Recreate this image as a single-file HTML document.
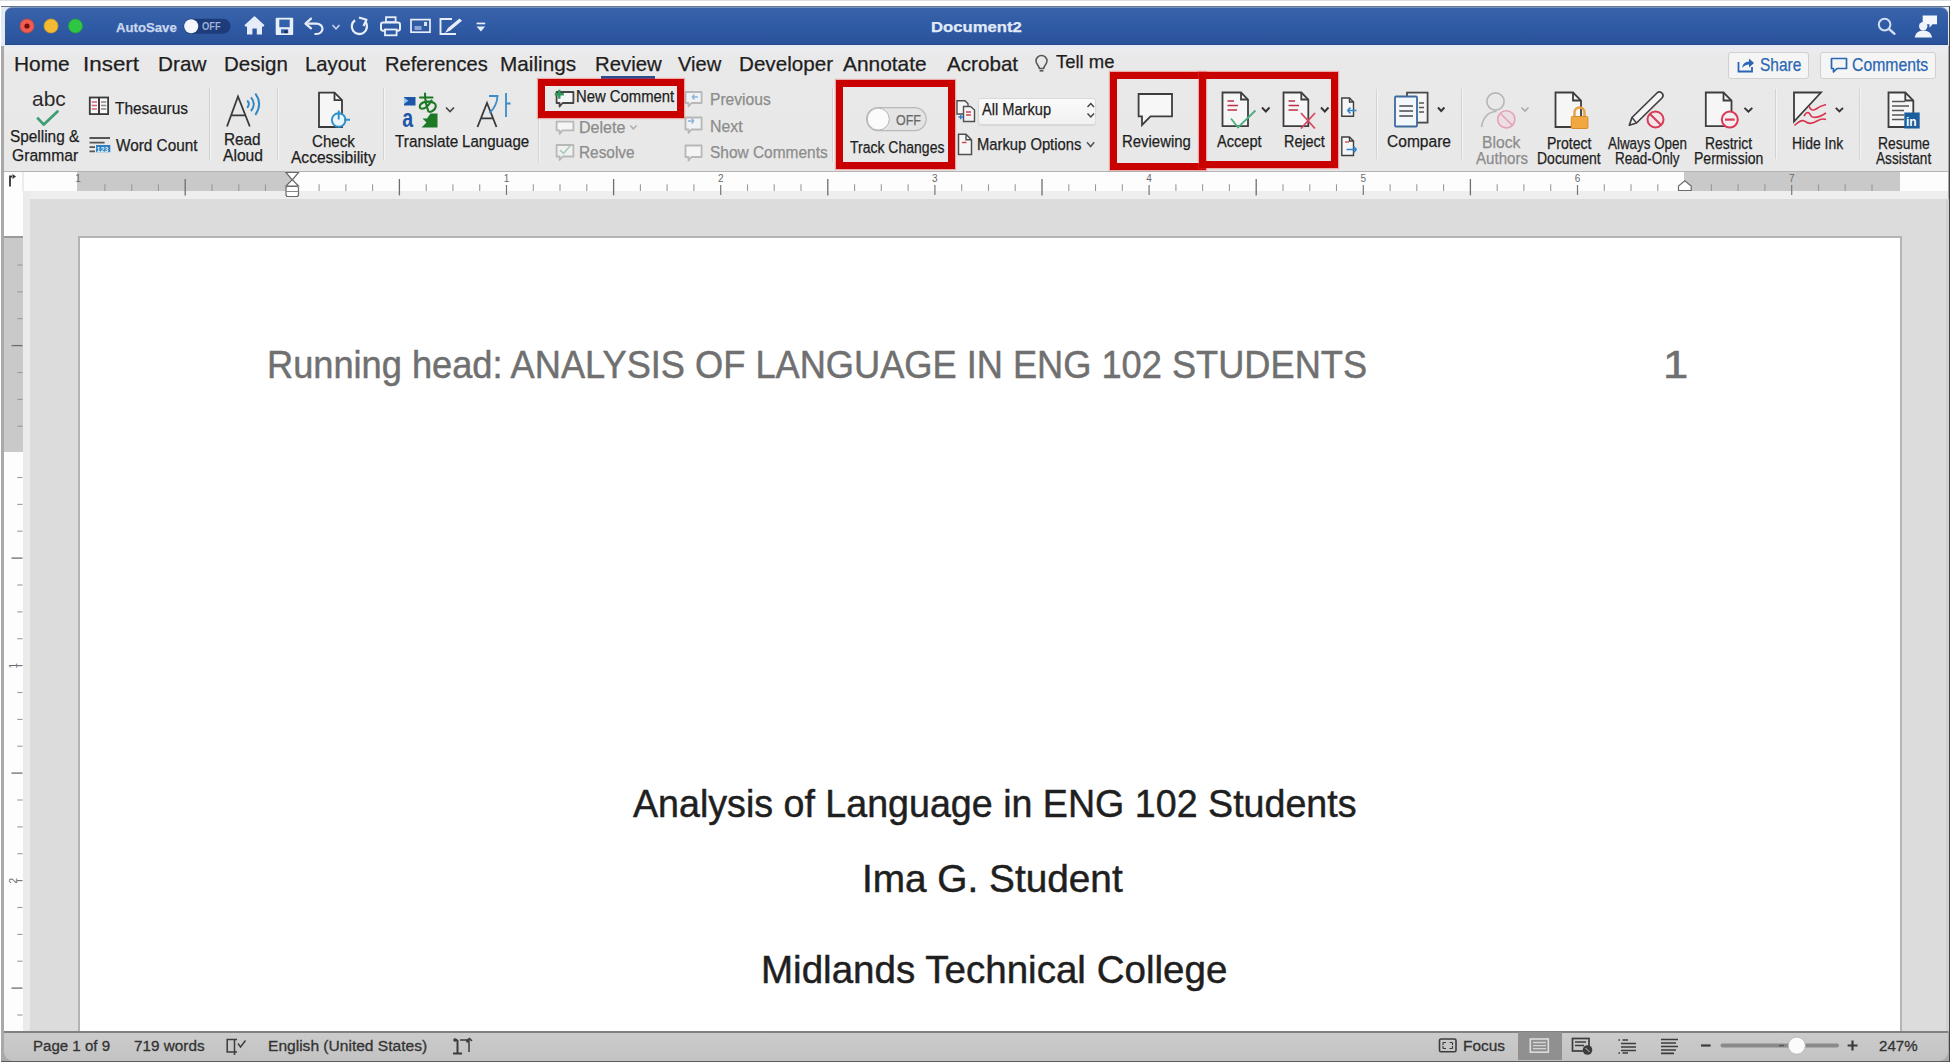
<!DOCTYPE html>
<html><head><meta charset="utf-8"><title>Document2</title>
<style>
*{margin:0;padding:0;box-sizing:border-box}
html,body{width:1951px;height:1064px;overflow:hidden;background:#fff;position:relative;font-family:"Liberation Sans",sans-serif}
.t{position:absolute;white-space:nowrap;line-height:1;transform-origin:0 0;font-family:"Liberation Sans",sans-serif;-webkit-text-stroke:.25px currentColor}
.bl{display:inline-block;width:0;height:0}
.a{position:absolute}
.sep{position:absolute;width:2px;background:#d3d3d3;border-right:1px solid #f4f4f4}
.rbox{position:absolute;border:7px solid #c80000;box-shadow:0 0 1px 1px rgba(240,60,60,.35)}
svg{position:absolute;overflow:visible}
</style></head><body>
<div class="a" style="left:0;top:0;width:1951px;height:1px;background:#dadde1"></div>
<div class="a" style="left:1px;top:6px;width:1949px;height:1056px;background:#a9a9a9"></div>
<div class="a" style="left:1px;top:6px;width:1949px;height:40px;background:#e4e9f1"></div>
<div class="a" style="left:1px;top:6px;width:1949px;height:1px;background:#66768c"></div>
<div class="a" style="left:5px;top:7px;width:1943px;height:38px;border-radius:7px 7px 0 0;background:linear-gradient(#3a63a8,#305ca6 45%,#2a5299);border-top:1px solid #7592c2;border-bottom:1px solid #27498a"></div>
<div class="a" style="left:4px;top:45px;width:1944px;height:126px;background:linear-gradient(#e4eaf4,#ececef 4px,#e9e9e9 12px,#e8e8e8)"></div>
<div class="a" style="left:4px;top:171px;width:1944px;height:1px;background:#b4b4b4"></div>
<div class="a" style="left:4px;top:172px;width:1944px;height:19px;background:#fdfdfd"></div>
<div class="a" style="left:77px;top:172px;width:215px;height:19px;background:#c9c9c9"></div>
<div class="a" style="left:1684px;top:172px;width:216px;height:19px;background:#c9c9c9"></div>
<div class="a" style="left:22px;top:172px;width:2px;height:19px;background:#ececec"></div>
<div class="a" style="left:22px;top:190.5px;width:1926px;height:8.5px;background:#eeeeee"></div>
<div class="a" style="left:22px;top:191px;width:8px;height:840px;background:#ebebeb"></div>
<div class="a" style="left:30px;top:199px;width:1918px;height:832px;background:#dcdcdc"></div>
<div class="a" style="left:78px;top:236px;width:1824px;height:800px;background:#fff;border-left:2px solid #b4b4b4;border-top:2px solid #b4b4b4;border-right:2px solid #b4b4b4"></div>
<div class="a" style="left:4px;top:191px;width:19px;height:840px;background:#fdfdfd"></div>
<div class="a" style="left:4px;top:237px;width:19px;height:215px;background:#c9c9c9"></div>
<div class="a" style="left:4px;top:1031px;width:1944px;height:2px;background:#808080"></div>
<div class="a" style="left:4px;top:1033px;width:1944px;height:28px;background:linear-gradient(#cbcbcb,#c3c3c3);border-radius:0 0 9px 9px"></div>
<div class="a" style="left:1517.5px;top:1032px;width:44px;height:28px;background:#909090"></div>
<div class="a" style="left:1px;top:1061px;width:1949px;height:1px;background:#5a5a5a"></div>
<div class="a" style="left:1949px;top:6px;width:1px;height:1056px;background:#454545"></div>
<div class="a" style="left:1946px;top:199px;width:3px;height:832px;background:#d2d2d2"></div>
<svg style="left:0;top:165px" width="1951" height="40" viewBox="0 165 1951 40"><text x="78.1" y="181.5" font-size="10" font-family="Liberation Sans" text-anchor="middle" fill="#6a6a6a">1</text><path d="M104.9 184.3 V191" stroke="#9a9a9a" stroke-width="1.1"/><path d="M131.7 184.3 V191" stroke="#9a9a9a" stroke-width="1.1"/><path d="M158.4 184.3 V191" stroke="#9a9a9a" stroke-width="1.1"/><path d="M185.2 179 V195.4" stroke="#6e6e6e" stroke-width="1.3"/><path d="M212.0 184.3 V191" stroke="#9a9a9a" stroke-width="1.1"/><path d="M238.8 184.3 V191" stroke="#9a9a9a" stroke-width="1.1"/><path d="M265.5 184.3 V191" stroke="#9a9a9a" stroke-width="1.1"/><path d="M319.1 184.3 V191" stroke="#9a9a9a" stroke-width="1.1"/><path d="M345.9 184.3 V191" stroke="#9a9a9a" stroke-width="1.1"/><path d="M372.6 184.3 V191" stroke="#9a9a9a" stroke-width="1.1"/><path d="M399.4 179 V195.4" stroke="#6e6e6e" stroke-width="1.3"/><path d="M426.2 184.3 V191" stroke="#9a9a9a" stroke-width="1.1"/><path d="M452.9 184.3 V191" stroke="#9a9a9a" stroke-width="1.1"/><path d="M479.7 184.3 V191" stroke="#9a9a9a" stroke-width="1.1"/><text x="506.5" y="181.5" font-size="10" font-family="Liberation Sans" text-anchor="middle" fill="#6a6a6a">1</text><path d="M506.5 185 V195" stroke="#777" stroke-width="1.2"/><path d="M533.3 184.3 V191" stroke="#9a9a9a" stroke-width="1.1"/><path d="M560.0 184.3 V191" stroke="#9a9a9a" stroke-width="1.1"/><path d="M586.8 184.3 V191" stroke="#9a9a9a" stroke-width="1.1"/><path d="M613.6 179 V195.4" stroke="#6e6e6e" stroke-width="1.3"/><path d="M640.4 184.3 V191" stroke="#9a9a9a" stroke-width="1.1"/><path d="M667.1 184.3 V191" stroke="#9a9a9a" stroke-width="1.1"/><path d="M693.9 184.3 V191" stroke="#9a9a9a" stroke-width="1.1"/><text x="720.7" y="181.5" font-size="10" font-family="Liberation Sans" text-anchor="middle" fill="#6a6a6a">2</text><path d="M720.7 185 V195" stroke="#777" stroke-width="1.2"/><path d="M747.5 184.3 V191" stroke="#9a9a9a" stroke-width="1.1"/><path d="M774.2 184.3 V191" stroke="#9a9a9a" stroke-width="1.1"/><path d="M801.0 184.3 V191" stroke="#9a9a9a" stroke-width="1.1"/><path d="M827.8 179 V195.4" stroke="#6e6e6e" stroke-width="1.3"/><path d="M854.6 184.3 V191" stroke="#9a9a9a" stroke-width="1.1"/><path d="M881.3 184.3 V191" stroke="#9a9a9a" stroke-width="1.1"/><path d="M908.1 184.3 V191" stroke="#9a9a9a" stroke-width="1.1"/><text x="934.9" y="181.5" font-size="10" font-family="Liberation Sans" text-anchor="middle" fill="#6a6a6a">3</text><path d="M934.9 185 V195" stroke="#777" stroke-width="1.2"/><path d="M961.7 184.3 V191" stroke="#9a9a9a" stroke-width="1.1"/><path d="M988.5 184.3 V191" stroke="#9a9a9a" stroke-width="1.1"/><path d="M1015.2 184.3 V191" stroke="#9a9a9a" stroke-width="1.1"/><path d="M1042.0 179 V195.4" stroke="#6e6e6e" stroke-width="1.3"/><path d="M1068.8 184.3 V191" stroke="#9a9a9a" stroke-width="1.1"/><path d="M1095.5 184.3 V191" stroke="#9a9a9a" stroke-width="1.1"/><path d="M1122.3 184.3 V191" stroke="#9a9a9a" stroke-width="1.1"/><text x="1149.1" y="181.5" font-size="10" font-family="Liberation Sans" text-anchor="middle" fill="#6a6a6a">4</text><path d="M1149.1 185 V195" stroke="#777" stroke-width="1.2"/><path d="M1175.9 184.3 V191" stroke="#9a9a9a" stroke-width="1.1"/><path d="M1202.6 184.3 V191" stroke="#9a9a9a" stroke-width="1.1"/><path d="M1229.4 184.3 V191" stroke="#9a9a9a" stroke-width="1.1"/><path d="M1256.2 179 V195.4" stroke="#6e6e6e" stroke-width="1.3"/><path d="M1283.0 184.3 V191" stroke="#9a9a9a" stroke-width="1.1"/><path d="M1309.8 184.3 V191" stroke="#9a9a9a" stroke-width="1.1"/><path d="M1336.5 184.3 V191" stroke="#9a9a9a" stroke-width="1.1"/><text x="1363.3" y="181.5" font-size="10" font-family="Liberation Sans" text-anchor="middle" fill="#6a6a6a">5</text><path d="M1363.3 185 V195" stroke="#777" stroke-width="1.2"/><path d="M1390.1 184.3 V191" stroke="#9a9a9a" stroke-width="1.1"/><path d="M1416.8 184.3 V191" stroke="#9a9a9a" stroke-width="1.1"/><path d="M1443.6 184.3 V191" stroke="#9a9a9a" stroke-width="1.1"/><path d="M1470.4 179 V195.4" stroke="#6e6e6e" stroke-width="1.3"/><path d="M1497.2 184.3 V191" stroke="#9a9a9a" stroke-width="1.1"/><path d="M1523.9 184.3 V191" stroke="#9a9a9a" stroke-width="1.1"/><path d="M1550.7 184.3 V191" stroke="#9a9a9a" stroke-width="1.1"/><text x="1577.5" y="181.5" font-size="10" font-family="Liberation Sans" text-anchor="middle" fill="#6a6a6a">6</text><path d="M1577.5 185 V195" stroke="#777" stroke-width="1.2"/><path d="M1604.3 184.3 V191" stroke="#9a9a9a" stroke-width="1.1"/><path d="M1631.0 184.3 V191" stroke="#9a9a9a" stroke-width="1.1"/><path d="M1657.8 184.3 V191" stroke="#9a9a9a" stroke-width="1.1"/><path d="M1711.4 184.3 V191" stroke="#9a9a9a" stroke-width="1.1"/><path d="M1738.1 184.3 V191" stroke="#9a9a9a" stroke-width="1.1"/><path d="M1764.9 184.3 V191" stroke="#9a9a9a" stroke-width="1.1"/><text x="1791.7" y="181.5" font-size="10" font-family="Liberation Sans" text-anchor="middle" fill="#6a6a6a">7</text><path d="M1791.7 185 V195" stroke="#777" stroke-width="1.2"/><path d="M1818.5 184.3 V191" stroke="#9a9a9a" stroke-width="1.1"/><path d="M1845.2 184.3 V191" stroke="#9a9a9a" stroke-width="1.1"/><path d="M1872.0 184.3 V191" stroke="#9a9a9a" stroke-width="1.1"/></svg>
<svg style="left:280px;top:170px" width="25" height="30" viewBox="280 170 25 30"><path d="M286 172.5 H298.5 L292.3 180 Z M286 186 L292.3 179.5 L298.5 186 Z" fill="#fff" stroke="#6a6a6a" stroke-width="1.2"/><rect x="286" y="186.5" width="12.5" height="10" rx="2" fill="#fff" stroke="#6a6a6a" stroke-width="1.2"/><path d="M286 191.5 H298.5" stroke="#888" stroke-width="1"/></svg>
<svg style="left:1675px;top:178px" width="20" height="16" viewBox="1675 178 20 16"><path d="M1678.5 190.5 V186 L1684.8 180.8 L1691.2 186 V190.5 Z" fill="#fff" stroke="#6a6a6a" stroke-width="1.2"/></svg>
<svg style="left:6px;top:172px" width="16" height="18" viewBox="6 172 16 18"><path d="M10 186.5 V176.5 H12" fill="none" stroke="#333" stroke-width="1.8"/><path d="M12.5 174 L16 176.5 L12.5 179 Z" fill="#333"/></svg>
<svg style="left:0;top:230px" width="30" height="805" viewBox="0 230 30 805"><path d="M17.3 265.0 H22.5" stroke="#9a9a9a" stroke-width="1.1"/><path d="M17.3 291.9 H22.5" stroke="#9a9a9a" stroke-width="1.1"/><path d="M17.3 318.7 H22.5" stroke="#9a9a9a" stroke-width="1.1"/><path d="M11.5 345.6 H22.5" stroke="#6e6e6e" stroke-width="1.3"/><path d="M17.3 372.5 H22.5" stroke="#9a9a9a" stroke-width="1.1"/><path d="M17.3 399.4 H22.5" stroke="#9a9a9a" stroke-width="1.1"/><path d="M17.3 426.2 H22.5" stroke="#9a9a9a" stroke-width="1.1"/><path d="M17.3 477.5 H22.5" stroke="#9a9a9a" stroke-width="1.1"/><path d="M17.3 504.4 H22.5" stroke="#9a9a9a" stroke-width="1.1"/><path d="M17.3 531.2 H22.5" stroke="#9a9a9a" stroke-width="1.1"/><path d="M11.5 558.1 H22.5" stroke="#6e6e6e" stroke-width="1.3"/><path d="M17.3 585.0 H22.5" stroke="#9a9a9a" stroke-width="1.1"/><path d="M17.3 611.9 H22.5" stroke="#9a9a9a" stroke-width="1.1"/><path d="M17.3 638.7 H22.5" stroke="#9a9a9a" stroke-width="1.1"/><text x="0" y="0" font-size="10" font-family="Liberation Sans" text-anchor="middle" fill="#6a6a6a" transform="translate(13.5 665.6) rotate(-90)" dy="3.5">1</text><path d="M17 665.6 H22.5" stroke="#777" stroke-width="1.2"/><path d="M17.3 692.5 H22.5" stroke="#9a9a9a" stroke-width="1.1"/><path d="M17.3 719.4 H22.5" stroke="#9a9a9a" stroke-width="1.1"/><path d="M17.3 746.2 H22.5" stroke="#9a9a9a" stroke-width="1.1"/><path d="M11.5 773.1 H22.5" stroke="#6e6e6e" stroke-width="1.3"/><path d="M17.3 800.0 H22.5" stroke="#9a9a9a" stroke-width="1.1"/><path d="M17.3 826.9 H22.5" stroke="#9a9a9a" stroke-width="1.1"/><path d="M17.3 853.7 H22.5" stroke="#9a9a9a" stroke-width="1.1"/><text x="0" y="0" font-size="10" font-family="Liberation Sans" text-anchor="middle" fill="#6a6a6a" transform="translate(13.5 880.6) rotate(-90)" dy="3.5">2</text><path d="M17 880.6 H22.5" stroke="#777" stroke-width="1.2"/><path d="M17.3 907.5 H22.5" stroke="#9a9a9a" stroke-width="1.1"/><path d="M17.3 934.4 H22.5" stroke="#9a9a9a" stroke-width="1.1"/><path d="M17.3 961.2 H22.5" stroke="#9a9a9a" stroke-width="1.1"/><path d="M11.5 988.1 H22.5" stroke="#6e6e6e" stroke-width="1.3"/><path d="M17.3 1015.0 H22.5" stroke="#9a9a9a" stroke-width="1.1"/></svg>
<div class="a" style="left:4px;top:236px;width:19px;height:2px;background:#9a9a9a"></div>
<svg style="left:224px;top:1036px" width="26" height="22" viewBox="224 1036 26 22"><path d="M237 1039.5 H227.2 V1052 H237 M234.5 1039.5 V1055" fill="none" stroke="#3c3c3c" stroke-width="1.5"/><path d="M238 1043.5 L240.5 1047 L245.5 1040.5" fill="none" stroke="#3c3c3c" stroke-width="1.4"/></svg>
<svg style="left:450px;top:1036px" width="24" height="22" viewBox="450 1036 24 22"><path d="M453 1053.5 H462 M457.5 1040 V1053.5 M454 1040 H457.5" fill="none" stroke="#3c3c3c" stroke-width="2"/><circle cx="455" cy="1040" r="1.8" fill="#3c3c3c"/><path d="M460 1040 H469 V1052 M469 1040 L466.5 1042.5" fill="none" stroke="#3c3c3c" stroke-width="1.5"/><path d="M466 1041 L469.5 1038.5 L472 1041" fill="none" stroke="#3c3c3c" stroke-width="1.5"/></svg>
<svg style="left:1436px;top:1036px" width="24" height="20" viewBox="1436 1036 24 20"><rect x="1439.5" y="1039" width="16.5" height="12.8" rx="1.5" fill="none" stroke="#3c3c3c" stroke-width="1.6"/><path d="M1443 1042.5 H1446 M1443 1042.5 V1045 M1452.5 1042.5 H1449.5 M1452.5 1042.5 V1045 M1443 1048.5 H1446 M1443 1048.5 V1046 M1452.5 1048.5 H1449.5 M1452.5 1048.5 V1046" stroke="#3c3c3c" stroke-width="1.2" fill="none"/></svg>
<svg style="left:1526px;top:1036px" width="26" height="20" viewBox="1526 1036 26 20"><rect x="1530.3" y="1039" width="18" height="13.2" fill="none" stroke="#dcdcdc" stroke-width="1.6"/><path d="M1533 1042.5 H1546 M1533 1045.6 H1546 M1533 1048.7 H1546" stroke="#d4d4d4" stroke-width="1.3"/></svg>
<svg style="left:1569px;top:1036px" width="28" height="22" viewBox="1569 1036 28 22"><rect x="1572.5" y="1038.5" width="16.5" height="12.5" fill="none" stroke="#3c3c3c" stroke-width="1.7"/><path d="M1575 1042 H1586 M1575 1045.5 H1584" stroke="#3c3c3c" stroke-width="1.4"/><circle cx="1587.5" cy="1050" r="4.8" fill="#3c3c3c"/><path d="M1585.5 1048 L1589.5 1052" stroke="#c4c4c4" stroke-width="1"/></svg>
<svg style="left:1616px;top:1036px" width="24" height="20" viewBox="1616 1036 24 20"><path d="M1618.5 1040 H1620 M1622.5 1040 H1628 M1621 1043.5 H1636 M1621 1047 H1636 M1621 1050.5 H1636 M1618.5 1053 H1620 M1622.5 1053 H1628" stroke="#3c3c3c" stroke-width="1.6"/></svg>
<svg style="left:1658px;top:1036px" width="24" height="20" viewBox="1658 1036 24 20"><path d="M1661 1039.5 H1678 M1661 1043 H1676 M1661 1046.5 H1678 M1661 1050 H1676 M1661 1053.3 H1674" stroke="#3c3c3c" stroke-width="1.7"/></svg>
<svg style="left:1695px;top:1034px" width="170" height="24" viewBox="1695 1034 170 24"><path d="M1701 1045.5 H1710.6" stroke="#3c3c3c" stroke-width="2.2"/><rect x="1720.5" y="1043.6" width="118.5" height="4" rx="2" fill="#8a8a8a"/><path d="M1779 1045.6 H1784" stroke="#555" stroke-width="1.4"/><circle cx="1796.8" cy="1045.6" r="8.6" fill="#fbfbfb" stroke="#b0b0b0" stroke-width=".8"/><path d="M1847.6 1045.5 H1857.5 M1852.5 1040.5 V1050.5" stroke="#3c3c3c" stroke-width="2.2"/></svg>
<svg style="left:15px;top:14px" width="72" height="26" viewBox="15 14 72 26"><circle cx="27" cy="26" r="7" fill="#ef5d52" stroke="#c9453c" stroke-width=".8"/><circle cx="27" cy="26" r="2.6" fill="#7a0a08"/><circle cx="51" cy="26" r="7" fill="#f3bb34" stroke="#cf9a22" stroke-width=".8"/><circle cx="75.5" cy="26" r="7" fill="#30c645" stroke="#21a233" stroke-width=".8"/></svg>
<svg style="left:180px;top:16px" width="55" height="22" viewBox="180 16 55 22"><rect x="183.5" y="18.7" width="47" height="15" rx="7.5" fill="#1e3c79"/><circle cx="191.2" cy="26.2" r="7" fill="#f4f6fb"/></svg>
<svg style="left:243px;top:15px" width="23" height="22" viewBox="243 15 23 22"><path d="M245.2 26.2 L254.5 17.6 L263.7 26.2" fill="none" stroke="#e8eef9" stroke-width="2.4" stroke-linejoin="round"/><path d="M247 25.2 L254.5 18.8 L262 25.2 V34.6 H256.8 V28.4 H252.4 V34.6 H247 Z" fill="#e8eef9"/></svg>
<svg style="left:274px;top:16px" width="21" height="21" viewBox="274 16 21 21"><rect x="275.7" y="17.7" width="17.5" height="17.3" rx="1" fill="#e8eef9"/><rect x="279.3" y="19.6" width="10.4" height="7.6" fill="#3361ab"/><rect x="281" y="29.3" width="7.2" height="4" fill="#3361ab"/><rect x="284.5" y="30.5" width="3" height="2.6" fill="#1a2a4a"/></svg>
<svg style="left:303px;top:15px" width="40" height="22" viewBox="303 15 40 22"><path d="M307.5 23.6 H316.5 A6 5.2 0 0 1 316.5 34 H314.5" fill="none" stroke="#e8eef9" stroke-width="2.2"/><path d="M305.5 23.6 L311 18.6 M305.5 23.6 L311 28.4" stroke="#e8eef9" stroke-width="2.2" fill="none" stroke-linecap="round"/><path d="M332.5 25 L336 28.8 L339.5 25" fill="none" stroke="#c5d2ec" stroke-width="1.6"/></svg>
<svg style="left:348px;top:15px" width="23" height="23" viewBox="348 15 23 23"><path d="M355 20.2 A7.6 7.6 0 1 0 365.6 22" fill="none" stroke="#e8eef9" stroke-width="2.3"/><path d="M359 17.5 L366.5 19.8 L363.5 26" fill="none" stroke="#e8eef9" stroke-width="2.2" stroke-linejoin="round"/></svg>
<svg style="left:378px;top:15px" width="25" height="23" viewBox="378 15 25 23"><rect x="386" y="17.2" width="9.6" height="5" fill="none" stroke="#e8eef9" stroke-width="1.8"/><rect x="381" y="22.4" width="19" height="8.4" rx="2.2" fill="none" stroke="#e8eef9" stroke-width="2"/><rect x="385" y="29.5" width="11.6" height="5.8" fill="#2f5ca7" stroke="#e8eef9" stroke-width="1.8"/></svg>
<svg style="left:408px;top:17px" width="25" height="18" viewBox="408 17 25 18"><rect x="411" y="19.6" width="19" height="12.6" fill="none" stroke="#e8eef9" stroke-width="1.7"/><rect x="414.5" y="26" width="7" height="4" fill="#8ea6d4"/><rect x="424" y="22" width="3" height="4" fill="#dbe4f5"/></svg>
<svg style="left:437px;top:16px" width="28" height="21" viewBox="437 16 28 21"><path d="M452 19 H440.5 V34 H456" fill="none" stroke="#e8eef9" stroke-width="1.9"/><path d="M445 33 L448 28 L459.5 18.6 L462 20.8 L450.5 30.2 Z" fill="#e8eef9"/></svg>
<svg style="left:474px;top:20px" width="14" height="14" viewBox="474 20 14 14"><rect x="476.6" y="22.6" width="8.6" height="1.7" fill="#e8eef9"/><path d="M476.6 26.4 H485.2 L480.9 31.6 Z" fill="#e8eef9"/></svg>
<svg style="left:1876px;top:16px" width="22" height="22" viewBox="1876 16 22 22"><circle cx="1884.6" cy="24.6" r="5.8" fill="none" stroke="#d2def3" stroke-width="2"/><path d="M1889 29 L1894.5 33.8" stroke="#d2def3" stroke-width="2.4" stroke-linecap="round"/></svg>
<svg style="left:1912px;top:13px" width="28" height="27" viewBox="1912 13 28 27"><path d="M1922.7 15.4 H1937 V24.3 H1932.5 L1929.5 27.8 V24.3 H1922.7 Z" fill="#f4f7fc"/><circle cx="1923.2" cy="26.3" r="4.2" fill="#eef3fb"/><path d="M1914.6 37.4 Q1916 30.6 1923.3 30.6 Q1930.6 30.6 1932.3 37.4 Z" fill="#eef3fb"/></svg>
<div class="a" style="left:1727.5px;top:51.5px;width:81px;height:27px;border:1px solid #d0d0d0;border-radius:3px;background:#f5f5f5"></div>
<div class="a" style="left:1820px;top:51.5px;width:116px;height:27px;border:1px solid #d0d0d0;border-radius:3px;background:#f5f5f5"></div>
<svg style="left:1736px;top:56px" width="19" height="18" viewBox="1736 56 19 18"><path d="M1738.5 62 V71.5 H1752 V67" fill="none" stroke="#2a66b3" stroke-width="1.8"/><path d="M1742 68 Q1743 61.5 1749 61.5 V58.5 L1754 63 L1749 67.5 V64.5 Q1745 64.5 1742 68Z" fill="#2a66b3"/></svg>
<svg style="left:1829px;top:56px" width="20" height="18" viewBox="1829 56 20 18"><path d="M1831.5 58.5 H1846.5 V68.5 H1837 L1833.5 72 V68.5 H1831.5 Z" fill="none" stroke="#2a66b3" stroke-width="1.7" stroke-linejoin="round"/></svg>
<svg style="left:1033px;top:53px" width="17" height="21" viewBox="1033 53 17 21"><path d="M1041.5 55.5 A5.5 5.5 0 0 0 1036 61 C1036 64 1038.8 65.5 1039.4 68.5 H1043.6 C1044.2 65.5 1047 64 1047 61 A5.5 5.5 0 0 0 1041.5 55.5 Z" fill="none" stroke="#555" stroke-width="1.5"/><path d="M1039.6 70.8 H1043.4" stroke="#555" stroke-width="1.6"/></svg>
<div class="a" style="left:601px;top:75.5px;width:53.5px;height:3px;background:#2b4c8c"></div>
<svg style="left:34px;top:108px" width="27" height="20" viewBox="34 108 27 20"><path d="M37.2 117.6 L43.8 124.6 L58.3 110.8" fill="none" stroke="#3f9d74" stroke-width="2.8" stroke-linejoin="round"/></svg>
<svg style="left:87px;top:95px" width="24" height="22" viewBox="87 95 24 22"><rect x="89.8" y="97.5" width="18.3" height="16.6" fill="#f8f8f8" stroke="#3a3a3a" stroke-width="1.8"/><path d="M99 97.5 V114.5" stroke="#3a3a3a" stroke-width="2"/><path d="M91.7 102 H97 M91.7 105.5 H97 M91.7 109 H97" stroke="#d0607a" stroke-width="1.3"/><path d="M101 102 H106.3 M101 105.5 H106.3 M101 109 H106.3" stroke="#888" stroke-width="1.3"/></svg>
<svg style="left:87px;top:135px" width="26" height="20" viewBox="87 135 26 20"><path d="M89.5 138 H110 M89.5 142.6 H104.6 M89.5 147.2 H95 M89.5 151.4 H95" stroke="#555" stroke-width="1.8"/><rect x="96" y="145" width="14.3" height="7.2" fill="#2f80c0"/><text x="96.6" y="151.5" font-size="7" font-family="Liberation Sans" font-weight="700" fill="#dff0ff">123</text></svg>
<div class="sep" style="left:208.5px;top:88px;height:72px"></div>
<div class="sep" style="left:277px;top:88px;height:72px"></div>
<div class="sep" style="left:383px;top:88px;height:72px"></div>
<div class="sep" style="left:538px;top:88px;height:74px"></div>
<div class="sep" style="left:831.5px;top:88px;height:74px"></div>
<div class="sep" style="left:1376px;top:89px;height:70px"></div>
<div class="sep" style="left:1460.5px;top:89px;height:70px"></div>
<div class="sep" style="left:1774.5px;top:89px;height:70px"></div>
<div class="sep" style="left:1858.5px;top:89px;height:70px"></div>
<svg style="left:222px;top:90px" width="44" height="40" viewBox="222 90 44 40"><path d="M227 126.5 L238 96.5 L249.8 126.5 M231.3 115.3 H245.5" fill="none" stroke="#3a3a3a" stroke-width="1.8"/><path d="M247.2 100.5 Q250.5 104 247.2 107.8 M251 97.3 Q256.6 104 251 111.2 M255.3 93.5 Q263 104 255.3 115" fill="none" stroke="#2f86c5" stroke-width="1.9"/></svg>
<svg style="left:315px;top:90px" width="40" height="42" viewBox="315 90 40 42"><path d="M319 92.7 H334.5 L342 100.2 V127 H319 Z" fill="#f6f6f6" stroke="#3a3a3a" stroke-width="1.8"/><path d="M334.5 92.7 V100.2 H342" fill="none" stroke="#3a3a3a" stroke-width="1.8"/><circle cx="338.7" cy="120" r="6.8" fill="#eaf4fb" stroke="#2f90c8" stroke-width="1.9"/><path d="M338.7 110.5 V119.5 M344 119.8 H350" stroke="#2f90c8" stroke-width="1.9"/></svg>
<svg style="left:400px;top:88px" width="42" height="42" viewBox="400 88 42 42"><path d="M404 97 H415.5 V105.5 H404 Z" fill="#1d56a8"/><path d="M404 97.5 L408.5 100.8 L404 104 Z" fill="#8fc3f0"/><text x="0" y="0" font-size="25" font-family="Liberation Sans" font-weight="700" fill="#1d56a8" transform="translate(402.3 127) scale(0.78 1)">a</text><path d="M420 97.5 H432.5 M425 93.5 Q425 103 428.5 111.5 M431.5 100.5 Q427 108.5 422 108.8 Q419 108.5 420 105.2 Q422 101.5 429 101.6 Q436.2 102 435.8 106.5 Q435 110.5 430 112" fill="none" stroke="#1c7a26" stroke-width="2.1" stroke-linecap="round"/><path d="M430.5 113.5 H437.5 V127.5 H421.5 L426.5 122.5 L422.5 118.5 L427 118.5 Z" fill="#1c7a26"/></svg>
<svg style="left:443px;top:104px" width="14" height="12" viewBox="443 104 14 12"><path d="M446 107.5 L450 111.6 L454 107.5" fill="none" stroke="#444" stroke-width="1.6"/></svg>
<svg style="left:474px;top:90px" width="40" height="40" viewBox="474 90 40 40"><path d="M477.5 127 L487 103 L496.5 127 M481 118.3 H493" fill="none" stroke="#3a3a3a" stroke-width="1.8"/><path d="M489 96 H497.5 Q497 106 489.5 113" fill="none" stroke="#3a8ccc" stroke-width="1.8"/><path d="M506 93 V117 M506 103.5 H510.5" stroke="#3a8ccc" stroke-width="1.8" fill="none"/></svg>
<svg style="left:550px;top:86px" width="30" height="24" viewBox="550 86 30 24"><path d="M556.6 92 H573.4 V103 H562.6 L559.6 106.5 V103 H556.6 Z" fill="#f6f6f6" stroke="#454545" stroke-width="1.8" stroke-linejoin="round"/><path d="M559.3 89.8 V98.8 M554.8 94.3 H563.8" stroke="#2c9a5a" stroke-width="2.4"/></svg>
<svg style="left:550px;top:116px" width="30" height="22" viewBox="550 116 30 22"><path d="M556.6 121.6 H573.4 V130.4 H562.6 L559.6 133.9 V130.4 H556.6 Z" fill="#f6f6f6" stroke="#b8b8b8" stroke-width="1.8" stroke-linejoin="round"/></svg>
<svg style="left:627px;top:122px" width="12" height="10" viewBox="627 122 12 10"><path d="M630.2 125.5 L633.4 128.8 L636.6 125.5" fill="none" stroke="#b0b0b0" stroke-width="1.6"/></svg>
<svg style="left:550px;top:141px" width="30" height="24" viewBox="550 141 30 24"><path d="M556.6 145 H573.4 V156.5 H562.6 L559.6 160 V156.5 H556.6 Z" fill="#f0f0f0" stroke="#b8b8b8" stroke-width="1.8" stroke-linejoin="round"/><path d="M560 150 L563.5 153.5 L570 146" fill="none" stroke="#a8c8b0" stroke-width="1.5"/></svg>
<svg style="left:682px;top:88px" width="24" height="22" viewBox="682 88 24 22"><path d="M685.5 92 H701.6 V103 H691.5 L688.5 106.5 V103 H685.5 Z" fill="#f0f2f5" stroke="#b8b8b8" stroke-width="1.8" stroke-linejoin="round"/><path d="M692 97 H698 M692 97 L694.5 94.5 M692 97 L694.5 99.5" stroke="#8ab4d4" stroke-width="1.3" fill="none"/></svg>
<svg style="left:682px;top:114px" width="24" height="22" viewBox="682 114 24 22"><path d="M685.5 117.5 H701.6 V129.5 H691.5 L688.5 133 V129.5 H685.5 Z" fill="#f0f2f5" stroke="#b8b8b8" stroke-width="1.8" stroke-linejoin="round"/><path d="M688 121 H694 M694 121 L691.5 118.5 M694 121 L691.5 123.5" stroke="#8ab4d4" stroke-width="1.3" fill="none"/></svg>
<svg style="left:682px;top:142px" width="24" height="22" viewBox="682 142 24 22"><path d="M685.5 145.5 H701.6 V157 H691.5 L688.5 160.5 V157 H685.5 Z" fill="#f4f4f4" stroke="#b8b8b8" stroke-width="1.8" stroke-linejoin="round"/></svg>
<svg style="left:862px;top:104px" width="68" height="30" viewBox="862 104 68 30"><rect x="866.6" y="107.6" width="59.6" height="23" rx="11.5" fill="#e4e4e4" stroke="#b9b9b9" stroke-width="1.2"/><circle cx="878.3" cy="119.1" r="11" fill="#fbfbfb" stroke="#b4b4b4" stroke-width="1"/></svg>
<svg style="left:953px;top:98px" width="24" height="26" viewBox="953 98 24 26"><path d="M957 100.8 H965 L968 103.8 V114 H957 Z" fill="#f4f4f4" stroke="#505050" stroke-width="1.4"/><path d="M963.5 106.5 H970.5 L974.5 110 V121.5 H963.5 Z" fill="#f4f4f4" stroke="#505050" stroke-width="1.4"/><path d="M966 112 H971 M966 115 H971" stroke="#d04050" stroke-width="1.4"/><path d="M958.5 117 H963 M960.7 114.8 V119.2" stroke="#2f7fd0" stroke-width="1.5"/></svg>
<div class="a" style="left:978px;top:97.5px;width:118px;height:27.5px;background:linear-gradient(#fbfbfb,#f1f1f1);border:1px solid #d9d9d9;border-radius:3px;box-shadow:0 1px 1px rgba(0,0,0,.08)"></div>
<svg style="left:1084px;top:100px" width="14" height="21" viewBox="1084 100 14 21"><path d="M1087.5 107 L1090.8 103.6 L1094 107 M1087.5 113.6 L1090.8 117 L1094 113.6" fill="none" stroke="#444" stroke-width="1.5"/></svg>
<svg style="left:955px;top:131px" width="20" height="26" viewBox="955 131 20 26"><path d="M958.5 134.3 H966 L971.5 139.8 V154.4 H958.5 Z" fill="#f6f6f6" stroke="#505050" stroke-width="1.5"/><path d="M966 134.3 V139.8 H971.5" fill="none" stroke="#505050" stroke-width="1.4"/><path d="M962 142.5 H966.5" stroke="#d04050" stroke-width="1.4"/></svg>
<svg style="left:1084px;top:139px" width="14" height="11" viewBox="1084 139 14 11"><path d="M1087 142.3 L1090.6 146.5 L1094.2 142.3" fill="none" stroke="#555" stroke-width="1.6"/></svg>
<svg style="left:1134px;top:90px" width="42" height="38" viewBox="1134 90 42 38"><path d="M1138.6 94 H1172 V116.3 H1150.5 L1142 125 V116.3 H1138.6 Z" fill="#f7f7f7" stroke="#3e3e3e" stroke-width="1.8" stroke-linejoin="miter"/></svg>
<svg style="left:1218px;top:89px" width="42" height="42" viewBox="1218 89 42 42"><path d="M1222.5 92.5 H1241 L1248 99.5 V126.2 H1222.5 Z" fill="#f6f6f6" stroke="#3e3e3e" stroke-width="1.8"/><path d="M1241 92.5 V99.5 H1248" fill="none" stroke="#3e3e3e" stroke-width="1.8"/><path d="M1227.5 101 H1234 M1227.5 105.5 H1238 M1227.5 110 H1237" stroke="#c0304a" stroke-width="1.6"/><path d="M1231 118.5 L1238 127.5 L1255.5 110.5" fill="none" stroke="#49b07a" stroke-width="1.8"/></svg>
<svg style="left:1259px;top:104px" width="14" height="11" viewBox="1259 104 14 11"><path d="M1262 107.5 L1265.8 111.5 L1269.5 107.5" fill="none" stroke="#333" stroke-width="1.9"/></svg>
<svg style="left:1280px;top:89px" width="40" height="42" viewBox="1280 89 40 42"><path d="M1283.5 92.5 H1301.3 L1308.3 99.5 V126.2 H1283.5 Z" fill="#f6f6f6" stroke="#3e3e3e" stroke-width="1.8"/><path d="M1301.3 92.5 V99.5 H1308.3" fill="none" stroke="#3e3e3e" stroke-width="1.8"/><path d="M1288.5 101 H1295 M1288.5 105.5 H1299 M1288.5 110 H1298" stroke="#c0304a" stroke-width="1.6"/><path d="M1301 113 L1315 128.5 M1315 113 L1301 128.5" stroke="#d84860" stroke-width="1.8"/></svg>
<svg style="left:1318px;top:104px" width="14" height="11" viewBox="1318 104 14 11"><path d="M1321 107.5 L1324.8 111.5 L1328.5 107.5" fill="none" stroke="#333" stroke-width="1.9"/></svg>
<svg style="left:1339px;top:95px" width="22" height="24" viewBox="1339 95 22 24"><path d="M1341.8 98 H1349.5 L1353.5 102 V116.2 H1341.8 Z" fill="#f6f6f6" stroke="#3e3e3e" stroke-width="1.4"/><path d="M1349.5 98 V102 H1353.5" fill="none" stroke="#3e3e3e" stroke-width="1.4"/><path d="M1356.5 110.5 H1347.5 M1347.5 110.5 L1350.5 107.5 M1347.5 110.5 L1350.5 113.5" stroke="#2f86d0" stroke-width="1.6" fill="none"/></svg>
<svg style="left:1339px;top:134px" width="22" height="24" viewBox="1339 134 22 24"><path d="M1341.8 137 H1349.5 L1353.5 141 V155.5 H1341.8 Z" fill="#f6f6f6" stroke="#3e3e3e" stroke-width="1.4"/><path d="M1349.5 137 V141 H1353.5" fill="none" stroke="#3e3e3e" stroke-width="1.4"/><path d="M1346.5 149.5 H1356.5 M1356.5 149.5 L1353.5 146.5 M1356.5 149.5 L1353.5 152.5" stroke="#2f86d0" stroke-width="1.6" fill="none"/><path d="M1345 142 H1349" stroke="#d04050" stroke-width="1.3"/></svg>
<svg style="left:1390px;top:89px" width="58" height="42" viewBox="1390 89 58 42"><rect x="1407" y="92.6" width="20.6" height="30" fill="#f4f4f4" stroke="#4a4a4a" stroke-width="1.8"/><path d="M1419 103 H1424 M1419 107.5 H1424 M1419 112 H1424" stroke="#555" stroke-width="1.4"/><rect x="1395" y="96.5" width="22" height="30" rx="1" fill="#f2f7fc" stroke="#3e6a9c" stroke-width="1.8"/><path d="M1399.3 106 H1413 M1399.3 111 H1413 M1399.3 116 H1413" stroke="#4a4a4a" stroke-width="1.6"/><path d="M1438 107.5 L1441.2 111 L1444.4 107.5" fill="none" stroke="#333" stroke-width="1.9"/></svg>
<svg style="left:1478px;top:90px" width="56" height="42" viewBox="1478 90 56 42"><circle cx="1495.5" cy="101.5" r="8.6" fill="none" stroke="#b6b6b6" stroke-width="1.6"/><path d="M1481.5 127 Q1484 112 1496.5 111.5" fill="none" stroke="#b6b6b6" stroke-width="1.6"/><circle cx="1506.3" cy="119.3" r="8.6" fill="#ecdfe3" stroke="#e3a3b4" stroke-width="1.6"/><path d="M1500.5 113.5 L1512 125" stroke="#e3a3b4" stroke-width="1.6"/><path d="M1521.5 107.5 L1525 111 L1528.5 107.5" fill="none" stroke="#aaa" stroke-width="1.6"/></svg>
<svg style="left:1552px;top:90px" width="40" height="42" viewBox="1552 90 40 42"><path d="M1555.5 92.5 H1573 L1581 100.5 V127 H1555.5 Z" fill="#f6f6f6" stroke="#3e3e3e" stroke-width="1.8"/><path d="M1573 92.5 V100.5 H1581" fill="none" stroke="#3e3e3e" stroke-width="1.8"/><path d="M1574.5 116.5 V112.5 A5 5 0 0 1 1584.5 112.5 V116.5" fill="none" stroke="#e9a040" stroke-width="2.4"/><rect x="1571.3" y="116.5" width="16.6" height="12" rx="1" fill="#f2a840" stroke="#d78c2a" stroke-width="1"/></svg>
<svg style="left:1625px;top:90px" width="42" height="40" viewBox="1625 90 42 40"><path d="M1629.3 125.2 L1632 117.5 L1657.5 92.5 Q1660 91 1662.3 93.5 Q1664 96 1662 98 L1636.5 123 Z" fill="#f4f4f4" stroke="#404040" stroke-width="1.7" stroke-linejoin="round"/><path d="M1632 117.5 L1636.5 123" stroke="#404040" stroke-width="1.4"/><circle cx="1655.5" cy="119.5" r="8" fill="#f2e6e9" stroke="#d83a58" stroke-width="2"/><path d="M1650 114 L1661 125" stroke="#d83a58" stroke-width="2"/></svg>
<svg style="left:1702px;top:90px" width="54" height="40" viewBox="1702 90 54 40"><path d="M1705.8 92.5 H1723.5 L1731.5 100.5 V126.2 H1705.8 Z" fill="#f6f6f6" stroke="#3e3e3e" stroke-width="1.8"/><path d="M1723.5 92.5 V100.5 H1731.5" fill="none" stroke="#3e3e3e" stroke-width="1.8"/><circle cx="1729.8" cy="119.6" r="8" fill="#f6eef0" stroke="#d83a58" stroke-width="2"/><path d="M1725 119.6 H1734.6" stroke="#d83a58" stroke-width="2.2"/><path d="M1744.5 107.8 L1748.4 111.7 L1752.3 107.8" fill="none" stroke="#333" stroke-width="1.9"/></svg>
<svg style="left:1790px;top:89px" width="56" height="40" viewBox="1790 89 56 40"><path d="M1794 92.5 H1821 L1794 121.5 Z" fill="#f4f4f4" stroke="#3c3c3c" stroke-width="1.8" stroke-linejoin="miter"/><path d="M1809 106 Q1811 112 1816 109 Q1820 106 1826 104.5 M1804 116 Q1808 109 1811 116 Q1815 120 1826 113 M1794.5 125.5 Q1802 118 1806 122 Q1810 125 1817 121 Q1822 118 1826 119.5" fill="none" stroke="#d8344e" stroke-width="1.7"/><path d="M1835.8 107.8 L1839.4 111.4 L1843 107.8" fill="none" stroke="#333" stroke-width="1.9"/></svg>
<svg style="left:1885px;top:90px" width="40" height="42" viewBox="1885 90 40 42"><path d="M1888.5 92.5 H1905.3 L1913.3 100.5 V127 H1888.5 Z" fill="#f6f6f6" stroke="#3e3e3e" stroke-width="1.8"/><path d="M1905.3 92.5 V100.5 H1913.3" fill="none" stroke="#3e3e3e" stroke-width="1.8"/><path d="M1892 101.5 H1905 M1892 106 H1909 M1892 110.5 H1904 M1892 115 H1904 M1892 119.5 H1904" stroke="#555" stroke-width="1.4"/><rect x="1904.3" y="112.5" width="15.4" height="16" fill="#1a5e9e"/><text x="1906" y="126" font-size="12" font-family="Liberation Sans" font-weight="700" fill="#fff">in</text></svg>
<div class="rbox" style="left:538.2px;top:78.5px;width:145.4px;height:39.3px"></div>
<div class="rbox" style="left:836.3px;top:80.3px;width:118.5px;height:88.6px"></div>
<div class="rbox" style="left:1110px;top:72px;width:96px;height:98.2px"></div>
<div class="rbox" style="left:1199px;top:72px;width:138.8px;height:96.4px"></div>
<span class="t" style="left:115.67px;top:20.50px;font-size:13.50px;font-weight:700;color:#c9d6ee;transform:scaleX(0.9759);">AutoSave</span>
<span class="t" style="left:201.62px;top:22.20px;font-size:10.00px;font-weight:700;color:#9db0d6;transform:scaleX(0.9363);-webkit-text-stroke:0">OFF</span>
<span class="t" style="left:930.88px;top:20.20px;font-size:14.50px;font-weight:700;color:#e2eaf7;transform:scaleX(1.1496);">Document2</span>
<span class="t" style="left:13.69px;top:52.80px;font-size:21.00px;font-weight:400;color:#1e1e1e;transform:scaleX(0.9930);">Home</span>
<span class="t" style="left:83.33px;top:52.80px;font-size:21.00px;font-weight:400;color:#1e1e1e;transform:scaleX(1.0666);">Insert</span>
<span class="t" style="left:157.50px;top:52.80px;font-size:21.00px;font-weight:400;color:#1e1e1e;transform:scaleX(0.9885);">Draw</span>
<span class="t" style="left:224.32px;top:52.80px;font-size:21.00px;font-weight:400;color:#1e1e1e;transform:scaleX(0.9761);">Design</span>
<span class="t" style="left:304.54px;top:52.80px;font-size:21.00px;font-weight:400;color:#1e1e1e;transform:scaleX(0.9659);">Layout</span>
<span class="t" style="left:384.95px;top:52.80px;font-size:21.00px;font-weight:400;color:#1e1e1e;transform:scaleX(0.9570);">References</span>
<span class="t" style="left:499.80px;top:52.80px;font-size:21.00px;font-weight:400;color:#1e1e1e;transform:scaleX(0.9886);">Mailings</span>
<span class="t" style="left:594.93px;top:52.80px;font-size:21.00px;font-weight:400;color:#1e1e1e;transform:scaleX(0.9674);">Review</span>
<span class="t" style="left:678.21px;top:52.80px;font-size:21.00px;font-weight:400;color:#1e1e1e;transform:scaleX(0.9601);">View</span>
<span class="t" style="left:738.91px;top:52.80px;font-size:21.00px;font-weight:400;color:#1e1e1e;transform:scaleX(0.9822);">Developer</span>
<span class="t" style="left:843.26px;top:52.80px;font-size:21.00px;font-weight:400;color:#1e1e1e;transform:scaleX(0.9951);">Annotate</span>
<span class="t" style="left:947.36px;top:52.80px;font-size:21.00px;font-weight:400;color:#1e1e1e;transform:scaleX(0.9823);">Acrobat</span>
<span class="t" style="left:1055.58px;top:52.30px;font-size:19.00px;font-weight:400;color:#1e1e1e;transform:scaleX(0.9726);">Tell me</span>
<span class="t" style="left:1759.90px;top:55.40px;font-size:19.00px;font-weight:400;color:#2a66b3;transform:scaleX(0.8144);">Share</span>
<span class="t" style="left:1851.90px;top:55.40px;font-size:19.00px;font-weight:400;color:#2a66b3;transform:scaleX(0.8292);">Comments</span>
<span class="t" style="left:31.91px;top:89.40px;font-size:20.50px;font-weight:400;color:#2a2a2a;transform:scaleX(1.0205);-webkit-text-stroke:0">abc</span>
<span class="t" style="left:10.10px;top:127.90px;font-size:16.30px;font-weight:400;color:#1e1e1e;transform:scaleX(0.9442);">Spelling &amp;</span>
<span class="t" style="left:11.61px;top:146.70px;font-size:16.30px;font-weight:400;color:#1e1e1e;transform:scaleX(0.9622);">Grammar</span>
<span class="t" style="left:115.35px;top:99.90px;font-size:16.30px;font-weight:400;color:#1e1e1e;transform:scaleX(0.9489);">Thesaurus</span>
<span class="t" style="left:115.63px;top:136.50px;font-size:16.30px;font-weight:400;color:#1e1e1e;transform:scaleX(0.9411);">Word Count</span>
<span class="t" style="left:224.34px;top:130.50px;font-size:16.30px;font-weight:400;color:#1e1e1e;transform:scaleX(0.9412);">Read</span>
<span class="t" style="left:222.97px;top:147.40px;font-size:16.30px;font-weight:400;color:#1e1e1e;transform:scaleX(0.9612);">Aloud</span>
<span class="t" style="left:311.53px;top:132.50px;font-size:16.30px;font-weight:400;color:#1e1e1e;transform:scaleX(0.9261);">Check</span>
<span class="t" style="left:291.17px;top:149.40px;font-size:16.30px;font-weight:400;color:#1e1e1e;transform:scaleX(0.9548);">Accessibility</span>
<span class="t" style="left:395.36px;top:132.90px;font-size:16.30px;font-weight:400;color:#1e1e1e;transform:scaleX(0.9414);">Translate</span>
<span class="t" style="left:461.66px;top:132.90px;font-size:16.30px;font-weight:400;color:#1e1e1e;transform:scaleX(0.9277);">Language</span>
<span class="t" style="left:576.28px;top:87.80px;font-size:16.30px;font-weight:400;color:#1e1e1e;transform:scaleX(0.9114);">New Comment</span>
<span class="t" style="left:579.28px;top:118.60px;font-size:16.30px;font-weight:400;color:#8c8c8c;transform:scaleX(0.9841);">Delete</span>
<span class="t" style="left:579.34px;top:144.30px;font-size:16.30px;font-weight:400;color:#8c8c8c;transform:scaleX(0.9442);">Resolve</span>
<span class="t" style="left:709.82px;top:90.70px;font-size:16.30px;font-weight:400;color:#8c8c8c;transform:scaleX(0.9588);">Previous</span>
<span class="t" style="left:709.79px;top:117.70px;font-size:16.30px;font-weight:400;color:#8c8c8c;transform:scaleX(0.9773);">Next</span>
<span class="t" style="left:710.40px;top:144.30px;font-size:16.30px;font-weight:400;color:#8c8c8c;transform:scaleX(0.9491);">Show Comments</span>
<span class="t" style="left:895.51px;top:112.70px;font-size:14.00px;font-weight:400;color:#6a6a6a;transform:scaleX(0.8926);">OFF</span>
<span class="t" style="left:850.49px;top:139.20px;font-size:16.30px;font-weight:400;color:#1e1e1e;transform:scaleX(0.8600);">Track Changes</span>
<span class="t" style="left:982.27px;top:101.30px;font-size:16.30px;font-weight:400;color:#1e1e1e;transform:scaleX(0.8976);">All Markup</span>
<span class="t" style="left:977.39px;top:136.30px;font-size:16.30px;font-weight:400;color:#1e1e1e;transform:scaleX(0.9079);">Markup Options</span>
<span class="t" style="left:1122.47px;top:132.80px;font-size:16.30px;font-weight:400;color:#1e1e1e;transform:scaleX(0.9170);">Reviewing</span>
<span class="t" style="left:1216.97px;top:132.80px;font-size:16.30px;font-weight:400;color:#1e1e1e;transform:scaleX(0.8966);">Accept</span>
<span class="t" style="left:1283.92px;top:132.80px;font-size:16.30px;font-weight:400;color:#1e1e1e;transform:scaleX(0.8837);">Reject</span>
<span class="t" style="left:1387.11px;top:133.00px;font-size:16.30px;font-weight:400;color:#1e1e1e;transform:scaleX(0.9554);">Compare</span>
<span class="t" style="left:1481.91px;top:133.90px;font-size:16.30px;font-weight:400;color:#8c8c8c;transform:scaleX(0.9659);">Block</span>
<span class="t" style="left:1475.67px;top:150.00px;font-size:16.30px;font-weight:400;color:#8c8c8c;transform:scaleX(0.9279);">Authors</span>
<span class="t" style="left:1546.65px;top:134.50px;font-size:16.30px;font-weight:400;color:#1e1e1e;transform:scaleX(0.8616);">Protect</span>
<span class="t" style="left:1537.15px;top:150.00px;font-size:16.30px;font-weight:400;color:#1e1e1e;transform:scaleX(0.8590);">Document</span>
<span class="t" style="left:1608.17px;top:134.50px;font-size:16.30px;font-weight:400;color:#1e1e1e;transform:scaleX(0.8234);">Always Open</span>
<span class="t" style="left:1614.59px;top:150.00px;font-size:16.30px;font-weight:400;color:#1e1e1e;transform:scaleX(0.8292);">Read-Only</span>
<span class="t" style="left:1704.76px;top:134.50px;font-size:16.30px;font-weight:400;color:#1e1e1e;transform:scaleX(0.8543);">Restrict</span>
<span class="t" style="left:1694.05px;top:150.00px;font-size:16.30px;font-weight:400;color:#1e1e1e;transform:scaleX(0.8613);">Permission</span>
<span class="t" style="left:1792.36px;top:134.50px;font-size:16.30px;font-weight:400;color:#1e1e1e;transform:scaleX(0.8559);">Hide Ink</span>
<span class="t" style="left:1878.06px;top:134.50px;font-size:16.30px;font-weight:400;color:#1e1e1e;transform:scaleX(0.8553);">Resume</span>
<span class="t" style="left:1876.17px;top:150.00px;font-size:16.30px;font-weight:400;color:#1e1e1e;transform:scaleX(0.8360);">Assistant</span>
<span class="t" style="left:266.93px;top:344.90px;font-size:39.00px;font-weight:400;color:#707070;transform:scaleX(0.9284);-webkit-text-stroke:.5px #707070">Running head: ANALYSIS OF LANGUAGE IN ENG 102 STUDENTS</span>
<span class="t" style="left:1663.44px;top:344.90px;font-size:39.00px;font-weight:400;color:#707070;transform:scaleX(1.1647);-webkit-text-stroke:.5px #707070">1</span>
<span class="t" style="left:632.83px;top:784.00px;font-size:39.30px;font-weight:400;color:#1f1f1f;transform:scaleX(0.9572);-webkit-text-stroke:.5px #1f1f1f">Analysis of Language in ENG 102 Students</span>
<span class="t" style="left:862.42px;top:859.30px;font-size:39.30px;font-weight:400;color:#1f1f1f;transform:scaleX(0.9862);-webkit-text-stroke:.5px #1f1f1f">Ima G. Student</span>
<span class="t" style="left:760.84px;top:950.40px;font-size:39.30px;font-weight:400;color:#1f1f1f;transform:scaleX(0.9808);-webkit-text-stroke:.5px #1f1f1f">Midlands Technical College</span>
<span class="t" style="left:33.36px;top:1037.80px;font-size:15.30px;font-weight:400;color:#333;transform:scaleX(0.9847);-webkit-text-stroke:.3px #333">Page 1 of 9</span>
<span class="t" style="left:133.72px;top:1037.80px;font-size:15.30px;font-weight:400;color:#333;transform:scaleX(0.9994);-webkit-text-stroke:.3px #333">719 words</span>
<span class="t" style="left:267.72px;top:1037.80px;font-size:15.30px;font-weight:400;color:#333;transform:scaleX(1.0172);-webkit-text-stroke:.3px #333">English (United States)</span>
<span class="t" style="left:1463.14px;top:1037.80px;font-size:15.30px;font-weight:400;color:#333;transform:scaleX(1.0063);-webkit-text-stroke:.3px #333">Focus</span>
<span class="t" style="left:1878.74px;top:1037.80px;font-size:15.30px;font-weight:400;color:#333;transform:scaleX(0.9865);-webkit-text-stroke:.3px #333">247%</span>
</body></html>
